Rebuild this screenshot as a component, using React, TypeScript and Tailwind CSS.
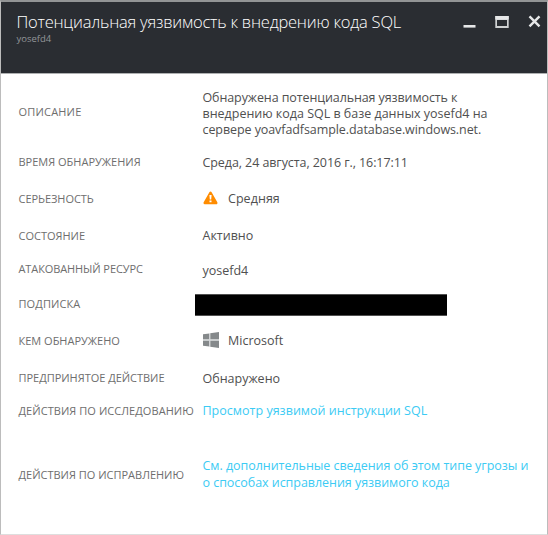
import type { ReactNode } from "react";

function Row({ label, labelClass = "", className, children }: { label: string; labelClass?: string; className: string; children: ReactNode }) {
  return (
    <div className={`flex shrink-0 items-center ${className}`}>
      <dt className={`w-[184px] shrink-0 text-[11px] text-[#6e6e6e] ${labelClass}`}>{label}</dt>
      <dd className="text-[12.5px] leading-4 text-[#505050]">{children}</dd>
    </div>
  );
}

function WarningIcon() {
  return (
    <svg width="15" height="14" viewBox="0 0 15 14" className="-mt-0.5 mr-[10.5px]">
      <path d="M7.5 1.9 13.2 12H1.8Z" fill="#ff8c00" stroke="#ff8c00" strokeWidth="2.6" strokeLinejoin="round" />
      <path d="M6.4 4h2.2L8.2 8.6H6.8ZM6.5 9.5h2v1.7H6.5Z" fill="#fff" />
    </svg>
  );
}

function WindowsIcon() {
  return (
    <svg width="16" height="16" viewBox="0 0 16 16" className="-mt-[3px] mr-[9.5px]">
      <path d="M0 2.3 6.4 1.4V7.6H0ZM7.2 1.3 16 0V7.6H7.2ZM0 8.4H6.4V14.6L0 13.7ZM7.2 8.4H16V16L7.2 14.7Z" fill="#85898b" />
      <path d="M6.4 1.4h.8v13.3h-.8ZM0 7.6h16v.8H0Z" fill="#d2d5d7" />
    </svg>
  );
}

export default function App() {
  return (
    <div className="flex h-[535px] w-[548px] flex-col border border-t-2 border-[#bcbcbc] border-t-[#929495] border-b-[#dedede] bg-white font-['Open_Sans','Noto_Sans',sans-serif]">
      <header className="flex h-[72px] shrink-0 items-start justify-between border-b border-[#aeb0b1] bg-[#2a2d32] pl-[15.5px] pr-[6px]">
        <div className="pt-[9px]">
          <h1 className="whitespace-nowrap text-[16.5px] leading-[22px] font-[350] tracking-[-0.22px] text-white">Потенциальная уязвимость к внедрению кода SQL</h1>
          <p className="text-[9.5px] leading-3 text-[#929598]">yosefd4</p>
        </div>
        <div className="flex gap-[19px] pt-[13px]">
          <svg width="13" height="13" viewBox="0 0 13 13" fill="#e6e7e8"><path d="M.5 10h12v2.6H.5Z" /></svg>
          <svg width="14" height="13" viewBox="0 0 14 13"><path d="M.3 1h13.4v12H.3Z" fill="#d0d2d3" /><path d="M.3 1h13.4v3.5H.3Z" fill="#e6e7e8" /><path d="M2 5h10v6H2Z" fill="#2a2d32" /></svg>
          <svg width="13" height="13" viewBox="0 0 13 13"><path d="m1.5 1.4 10 10M11.5 1.4l-10 10" stroke="#e6e7e8" strokeWidth="2.4" /></svg>
        </div>
      </header>
      <dl className="flex flex-col pt-[12px] pl-[17.5px]">
        <Row label="ОПИСАНИЕ" labelClass="tracking-[0.2px]" className="h-[52px]">
          <div className="whitespace-nowrap pt-[4px]">
            <div className="tracking-[-0.1px]">Обнаружена потенциальная уязвимость к</div>
            <div className="tracking-[-0.01px]">внедрению кода SQL в базе данных yosefd4 на</div>
            <div className="tracking-[-0.08px]">сервере yoavfadfsample.database.windows.net.</div>
          </div>
        </Row>
        <Row label="ВРЕМЯ ОБНАРУЖЕНИЯ" className="mt-[14px] h-[20px]">
          <div className="pt-[2px] tracking-[-0.08px]">Среда, 24 августа, 2016 г., 16:17:11</div>
        </Row>
        <Row label="СЕРЬЕЗНОСТЬ" labelClass="tracking-[-0.05px]" className="mt-[17px] h-[20px]">
          <span className="flex items-center tracking-[0.05px]"><WarningIcon />Средняя</span>
        </Row>
        <Row label="СОСТОЯНИЕ" className="mt-[17px] h-[20px]">Активно</Row>
        <Row label="АТАКОВАННЫЙ РЕСУРС" labelClass="tracking-[-0.1px]" className="mt-[13px] h-[20px]">
          <div className="pt-[4px]">yosefd4</div>
        </Row>
        <Row label="ПОДПИСКА" labelClass="pb-[2px] tracking-[0.1px]" className="mt-[15px] h-[22px]">
          <div className="-ml-[7.5px] h-[22px] w-[252px] border-y border-[#505050] bg-black" />
        </Row>
        <Row label="КЕМ ОБНАРУЖЕНО" className="mt-[15px] h-[20px]">
          <span className="flex items-center"><WindowsIcon />Microsoft</span>
        </Row>
        <Row label="ПРЕДПРИНЯТОЕ ДЕЙСТВИЕ" labelClass="-tracking-[0.02px]" className="mt-[17px] h-[20px]">
          <div className="pt-px">Обнаружено</div>
        </Row>
        <Row label="ДЕЙСТВИЯ ПО ИССЛЕДОВАНИЮ" labelClass="whitespace-nowrap tracking-[0.06px]" className="mt-[13px] h-[20px]">
          <a className="tracking-[0.02px] text-[#3ccbf4]">Просмотр уязвимой инструкции SQL</a>
        </Row>
        <Row label="ДЕЙСТВИЯ ПО ИСПРАВЛЕНИЮ" labelClass="whitespace-nowrap" className="mt-[37px] h-[34px]">
          <a className="block whitespace-nowrap pb-[2px] leading-[17px] tracking-[-0.04px] text-[#3ccbf4]">
            См. дополнительные сведения об этом типе угрозы и<br />о способах исправления уязвимого кода
          </a>
        </Row>
      </dl>
    </div>
  );
}
